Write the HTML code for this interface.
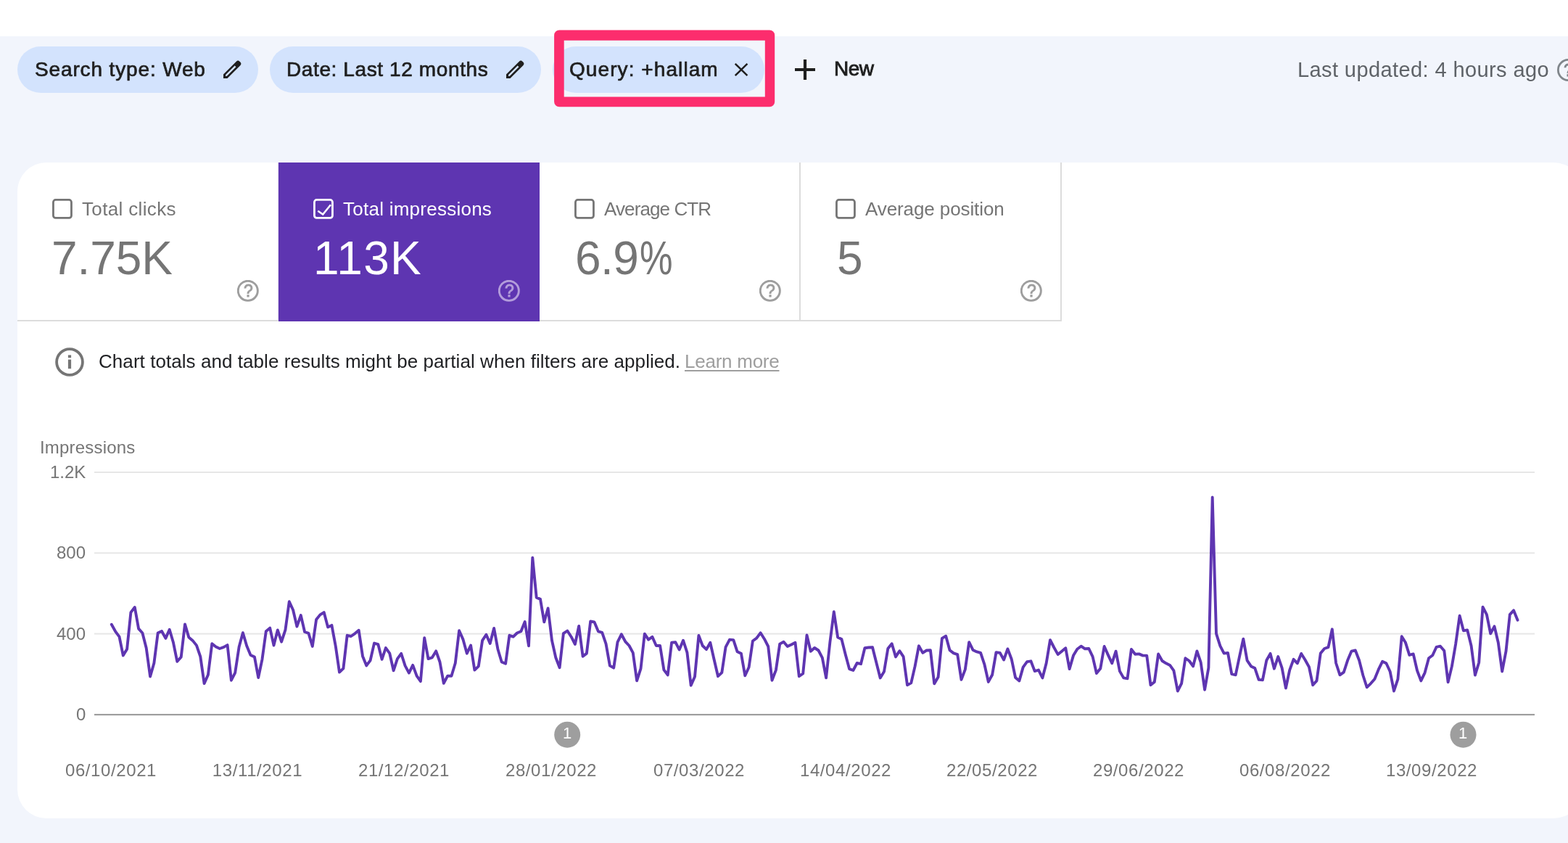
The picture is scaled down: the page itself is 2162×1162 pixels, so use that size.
<!DOCTYPE html>
<html lang="en"><head><meta charset="utf-8"><title>Search Console Performance</title>
<style>
*{box-sizing:border-box;margin:0;padding:0}
html,body{width:2162px;height:1162px;overflow:hidden;background:#fff}
body{position:relative;font-family:"Liberation Sans",sans-serif;color:#1f1f1f}
.abs{position:absolute}
.t{position:absolute;white-space:nowrap;line-height:1;will-change:transform}
#bg{left:0;top:50px;width:2162px;height:1112px;background:#f2f5fc}
.chip{position:absolute;top:64px;height:64px;border-radius:32px;background:#d3e3fd}
.chiptxt{font-size:28px;color:#1f1f1f;-webkit-text-stroke:0.7px #1f1f1f}
#card{left:24px;top:224px;width:2158px;height:904px;background:#fff;border-radius:40px}
.tile{position:absolute;top:224px;width:360px;height:219px;border-bottom:2px solid #dcdcdc}
.lbl{font-size:26px;color:#757575}
.val{font-size:64px;color:#757575}
.ax{font-size:24px;color:#757575}
</style></head>
<body>
<div id="bg" class="abs"></div>
<div class="chip" style="left:24px;width:332px"></div>
<div class="chip" style="left:372px;width:374px"></div>
<div class="chip" style="left:762px;width:292px"></div>
<span id="c1" class="t chiptxt" style="left:47.60px;top:81.70px;font-size:28px;letter-spacing:0.86px;">Search type: Web</span>
<span id="c2" class="t chiptxt" style="left:395.00px;top:81.70px;font-size:28px;letter-spacing:0.61px;">Date: Last 12 months</span>
<span id="c3" class="t chiptxt" style="left:785.20px;top:81.70px;font-size:28px;letter-spacing:1.08px;">Query: +hallam</span>
<svg class="abs" style="left:303.8px;top:77.8px;overflow:visible" width="34" height="34" viewBox="0 0 34 34"><g transform="translate(4 30) rotate(45)"><path fill-rule="evenodd" fill="#1f1f1f" d="M0 0 L-3.85 -3.85 L-3.85 -29.1 Q-3.85 -32.3 -0.65 -32.3 L0.65 -32.3 Q3.85 -32.3 3.85 -29.1 L3.85 -3.85 Z M-1.25 -23.4 L1.25 -23.4 L1.25 -5.7 L0 -4.3 L-1.25 -5.7 Z"/></g></svg>
<svg class="abs" style="left:693.8px;top:77.8px;overflow:visible" width="34" height="34" viewBox="0 0 34 34"><g transform="translate(4 30) rotate(45)"><path fill-rule="evenodd" fill="#1f1f1f" d="M0 0 L-3.85 -3.85 L-3.85 -29.1 Q-3.85 -32.3 -0.65 -32.3 L0.65 -32.3 Q3.85 -32.3 3.85 -29.1 L3.85 -3.85 Z M-1.25 -23.4 L1.25 -23.4 L1.25 -5.7 L0 -4.3 L-1.25 -5.7 Z"/></g></svg>
<svg class="abs" style="left:1011.9px;top:86px" width="20" height="20" viewBox="0 0 20 20"><path d="M1.7 1.8 L18.4 18.2 M18.4 1.8 L1.7 18.2" stroke="#1f1f1f" stroke-width="2.5" fill="none"/></svg>
<svg class="abs" style="left:760px;top:38px" width="312" height="114" viewBox="760 38 312 114"><path fill-rule="evenodd" fill="#fc2d6d" d="M771.1 41.5 H1061.2 A7 7 0 0 1 1068.2 48.5 V140.3 A7 7 0 0 1 1061.2 147.3 H771.1 A7 7 0 0 1 764.1 140.3 V48.5 A7 7 0 0 1 771.1 41.5 Z M777.7 55.7 V133.6 H1054.8 V55.7 Z"/></svg>
<svg class="abs" style="left:1095px;top:81.1px" width="30" height="30" viewBox="0 0 30 30"><path d="M15 1.1 V28.9 M1 15 H29" stroke="#1f1f1f" stroke-width="4.2" fill="none"/></svg>
<span id="new" class="t chiptxt" style="left:1150.00px;top:81.20px;font-size:28px;letter-spacing:-0.55px;-webkit-text-stroke:0.9px #1f1f1f">New</span>
<span id="lu" class="t " style="left:1788.60px;top:82.25px;font-size:29px;letter-spacing:0.4px;color:#5f6368">Last updated: 4 hours ago</span>
<svg class="abs" style="left:2147px;top:81px" width="32" height="32" viewBox="0 0 32 32"><circle cx="15.5" cy="15.5" r="14.1" fill="none" stroke="#80868b" stroke-width="2.8"/></svg>
<span class="t " style="left:2156.00px;top:85.53px;font-size:23px;letter-spacing:0px;color:#80868b;-webkit-text-stroke:0.8px #80868b">?</span>
<div id="card" class="abs"></div>
<div class="tile" style="left:24px;border-top-left-radius:40px;border-right:1px solid #e9e4f3;"></div>
<svg class="abs" style="left:72px;top:274px" width="28" height="28" viewBox="0 0 28 28"><rect x="1.45" y="1.45" width="25" height="25" rx="3.2" fill="none" stroke="#757575" stroke-width="2.8"/></svg>
<span id="l0" class="t lbl" style="left:112.80px;top:275.19px;font-size:26px;letter-spacing:0.35px;color:#757575">Total clicks</span>
<span id="v0" class="t val" style="left:70.60px;top:323.72px;font-size:64px;letter-spacing:-0.05px;color:#757575">7.75K</span>
<svg class="abs" style="left:327.2px;top:386.1px" width="30" height="30" viewBox="0 0 30 30"><circle cx="14.8" cy="14.8" r="13.55" fill="none" stroke="#9e9e9e" stroke-width="2.9"/></svg>
<span id="q0" class="t " style="left:335.60px;top:389.73px;font-size:23px;letter-spacing:0px;color:#9e9e9e;-webkit-text-stroke:0.9px #9e9e9e">?</span>
<div class="tile" style="left:384px;background:#5e35b1;border-bottom-color:#5e35b1;"></div>
<svg class="abs" style="left:432px;top:274px" width="28" height="28" viewBox="0 0 28 28"><rect x="1.45" y="1.45" width="25" height="25" rx="3.2" fill="none" stroke="#fff" stroke-width="2.8"/><path d="M6.3 16.8 L13.2 21.5 L24 8.2" stroke="#fff" stroke-width="2.5" fill="none"/></svg>
<span id="l1" class="t lbl" style="left:472.80px;top:275.19px;font-size:26px;letter-spacing:0.25px;color:#fff">Total impressions</span>
<span id="v1" class="t val" style="left:432.00px;top:323.72px;font-size:64px;letter-spacing:1.35px;color:#fff">113K</span>
<svg class="abs" style="left:687.2px;top:386.1px" width="30" height="30" viewBox="0 0 30 30"><circle cx="14.8" cy="14.8" r="13.55" fill="none" stroke="#b39ddb" stroke-width="2.9"/></svg>
<span id="q1" class="t " style="left:695.60px;top:389.73px;font-size:23px;letter-spacing:0px;color:#b39ddb;-webkit-text-stroke:0.9px #b39ddb">?</span>
<div class="tile" style="left:744px;border-right:2px solid #dcdcdc;"></div>
<svg class="abs" style="left:792px;top:274px" width="28" height="28" viewBox="0 0 28 28"><rect x="1.45" y="1.45" width="25" height="25" rx="3.2" fill="none" stroke="#757575" stroke-width="2.8"/></svg>
<span id="l2" class="t lbl" style="left:832.80px;top:275.19px;font-size:26px;letter-spacing:-0.9px;color:#757575">Average CTR</span>
<span id="v2" class="t val" style="left:792.60px;top:323.72px;font-size:64px;letter-spacing:-0.6px;color:#757575">6.9<span style="display:inline-block;letter-spacing:0;transform:scaleX(0.8);transform-origin:0 50%;margin-left:1.5px">%</span></span>
<svg class="abs" style="left:1047.2px;top:386.1px" width="30" height="30" viewBox="0 0 30 30"><circle cx="14.8" cy="14.8" r="13.55" fill="none" stroke="#9e9e9e" stroke-width="2.9"/></svg>
<span id="q2" class="t " style="left:1055.60px;top:389.73px;font-size:23px;letter-spacing:0px;color:#9e9e9e;-webkit-text-stroke:0.9px #9e9e9e">?</span>
<div class="tile" style="left:1104px;border-right:2px solid #dcdcdc;"></div>
<svg class="abs" style="left:1152px;top:274px" width="28" height="28" viewBox="0 0 28 28"><rect x="1.45" y="1.45" width="25" height="25" rx="3.2" fill="none" stroke="#757575" stroke-width="2.8"/></svg>
<span id="l3" class="t lbl" style="left:1192.80px;top:275.19px;font-size:26px;letter-spacing:-0.1px;color:#757575">Average position</span>
<span id="v3" class="t val" style="left:1154.40px;top:323.72px;font-size:64px;letter-spacing:0px;color:#757575">5</span>
<svg class="abs" style="left:1407.2px;top:386.1px" width="30" height="30" viewBox="0 0 30 30"><circle cx="14.8" cy="14.8" r="13.55" fill="none" stroke="#9e9e9e" stroke-width="2.9"/></svg>
<span id="q3" class="t " style="left:1415.60px;top:389.73px;font-size:23px;letter-spacing:0px;color:#9e9e9e;-webkit-text-stroke:0.9px #9e9e9e">?</span>
<svg class="abs" style="left:76px;top:479px" width="40" height="40" viewBox="0 0 40 40"><circle cx="20" cy="20" r="17.9" fill="none" stroke="#757575" stroke-width="3.8"/><rect x="17.9" y="10.4" width="4.2" height="3.8" fill="#757575"/><rect x="17.9" y="16.6" width="4.2" height="12.6" fill="#757575"/></svg>
<span id="info" class="t " style="left:135.90px;top:485.39px;font-size:26px;letter-spacing:0.06px;color:#202124">Chart totals and table results might be partial when filters are applied.</span>
<span id="lm" class="t " style="left:944.00px;top:485.39px;font-size:26px;letter-spacing:-0.25px;color:#9e9e9e;text-decoration:underline;text-decoration-thickness:1.6px;text-underline-offset:2.5px">Learn more</span>
<span id="imp" class="t ax" style="left:55.30px;top:604.68px;font-size:24px;letter-spacing:0.2px;">Impressions</span>
<svg class="abs" style="left:0;top:0" width="2162" height="1162" viewBox="0 0 2162 1162"><rect x="130" y="650.0" width="1986" height="2" fill="#e7e7e7"/><rect x="130" y="761.3" width="1986" height="2" fill="#e7e7e7"/><rect x="130" y="872.6" width="1986" height="2" fill="#e7e7e7"/><rect x="130" y="984.0" width="1986" height="2.2" fill="#9e9e9e"/><path d="M153.8 860.7 L159.1 870.3 L164.5 877.7 L169.8 903.6 L175.1 894.7 L180.4 844.1 L185.8 837.0 L191.1 866.6 L196.4 872.5 L201.7 893.3 L207.1 932.5 L212.4 914.0 L217.7 872.5 L223.0 870.0 L228.4 879.9 L233.7 867.8 L239.0 885.8 L244.3 911.8 L249.7 905.8 L255.0 860.4 L260.3 878.4 L265.6 882.9 L271.0 889.6 L276.3 905.1 L281.6 942.1 L286.9 930.3 L292.3 887.3 L297.6 891.5 L302.9 894.0 L308.3 892.1 L313.6 889.1 L318.9 937.7 L324.2 927.3 L329.6 891.8 L334.9 872.2 L340.2 890.3 L345.5 902.9 L350.9 905.4 L356.2 934.0 L361.5 908.8 L366.8 870.3 L372.2 865.6 L377.5 889.6 L382.8 868.4 L388.1 884.7 L393.5 868.1 L398.8 829.3 L404.1 840.7 L409.4 863.6 L414.8 848.1 L420.1 871.0 L425.4 872.8 L430.8 891.0 L436.1 854.0 L441.4 847.4 L446.7 844.1 L452.1 864.4 L457.4 861.9 L462.7 890.3 L468.0 926.6 L473.4 921.4 L478.7 875.8 L484.0 877.0 L489.3 873.3 L494.7 868.8 L500.0 904.4 L505.3 917.4 L510.6 910.3 L516.0 886.6 L521.3 888.1 L526.6 908.8 L531.9 893.0 L537.3 900.7 L542.6 924.3 L547.9 908.1 L553.2 900.9 L558.6 917.7 L563.9 927.6 L569.2 916.9 L574.6 931.7 L579.9 939.1 L585.2 879.2 L590.5 908.1 L595.9 906.3 L601.2 897.4 L606.5 912.5 L611.8 941.8 L617.2 931.7 L622.5 931.7 L627.8 914.0 L633.1 869.3 L638.5 881.4 L643.8 900.7 L649.1 889.6 L654.4 923.6 L659.8 918.4 L665.1 882.9 L670.4 874.7 L675.7 887.0 L681.1 865.9 L686.4 894.7 L691.7 912.5 L697.1 914.7 L702.4 875.8 L707.7 877.7 L713.0 872.5 L718.4 870.3 L723.7 857 L729.0 890.3 L734.3 768.6 L739.7 823.6 L745.0 825.9 L750.3 857.4 L755.6 838.4 L761.0 882.9 L766.3 906.5 L771.6 920.2 L776.9 873.2 L782.3 869.5 L787.6 877.7 L792.9 888 L798.2 862.9 L803.6 904.8 L808.9 900.6 L814.2 856.5 L819.5 857.4 L824.9 870.3 L830.2 871.8 L835.5 887.3 L840.9 917.6 L846.2 920.6 L851.5 885.1 L856.8 874.3 L862.2 884.3 L867.5 890 L872.8 899.9 L878.1 938.3 L883.5 921.6 L888.8 873.7 L894.1 881.6 L899.4 877.9 L904.8 890 L910.1 890 L915.4 923.4 L920.7 930.4 L926.1 885.8 L931.4 885.3 L936.7 895.5 L942.0 882.7 L947.4 899.3 L952.7 944.8 L958.0 932.7 L963.4 876 L968.7 890 L974.0 895.1 L979.3 885.8 L984.7 909.5 L990.0 932.2 L995.3 927.1 L1000.6 891.8 L1006.0 881.6 L1011.3 882.1 L1016.6 898.3 L1021.9 900.7 L1027.3 931.3 L1032.6 919.7 L1037.9 883.5 L1043.2 879.7 L1048.6 872.3 L1053.9 880.7 L1059.2 891.0 L1064.5 937.7 L1069.9 923.6 L1075.2 887.6 L1080.5 884.7 L1085.8 891 L1091.2 888.5 L1096.5 885.8 L1101.8 932.2 L1107.2 928.5 L1112.5 875.5 L1117.8 897.7 L1123.1 893 L1128.5 896.5 L1133.8 906.6 L1139.1 934.4 L1144.4 885.1 L1149.8 843.2 L1155.1 878.4 L1160.4 881.1 L1165.7 902.1 L1171.1 922.1 L1176.4 924 L1181.7 914 L1187.0 915.2 L1192.4 893.3 L1197.7 892.5 L1203.0 892.2 L1208.3 913.2 L1213.7 934.4 L1219.0 925.8 L1224.3 894 L1229.7 887.3 L1235.0 905.4 L1240.3 897.2 L1245.6 905.1 L1251.0 944.3 L1256.3 941.4 L1261.6 918.4 L1266.9 890.3 L1272.3 899.9 L1277.6 896.5 L1282.9 896.2 L1288.2 942.4 L1293.6 933.2 L1298.9 879.9 L1304.2 876.7 L1309.5 896.2 L1314.9 900.4 L1320.2 902.1 L1325.5 936.9 L1330.8 922.9 L1336.2 885.1 L1341.5 895.9 L1346.8 898.4 L1352.1 899.9 L1357.5 916.2 L1362.8 939.9 L1368.1 930.3 L1373.5 899.2 L1378.8 899.9 L1384.1 909.5 L1389.4 894.4 L1394.8 908.8 L1400.1 934 L1405.4 938.4 L1410.7 919.6 L1416.1 912.2 L1421.4 911.3 L1426.7 925.1 L1432.0 923.6 L1437.4 934.4 L1442.7 914 L1448.0 882.1 L1453.3 892.5 L1458.7 902.1 L1464.0 897.7 L1469.3 893.3 L1474.6 922.1 L1480.0 903.6 L1485.3 894.7 L1490.6 890.7 L1496.0 894.3 L1501.3 894 L1506.6 905.1 L1511.9 928 L1517.3 921.4 L1522.6 891 L1527.9 902.9 L1533.2 914.3 L1538.6 897.7 L1543.9 925.1 L1549.2 934.4 L1554.5 935.4 L1559.9 895 L1565.2 901.8 L1570.5 901.4 L1575.8 903.6 L1581.2 903.6 L1586.5 944.3 L1591.8 939.9 L1597.1 901.4 L1602.5 911 L1607.8 914.3 L1613.1 916.9 L1618.4 924.3 L1623.8 952.5 L1629.1 942.1 L1634.4 907.3 L1639.8 911 L1645.1 918.4 L1650.4 897.4 L1655.7 913.2 L1661.1 950.7 L1666.4 920.5 L1671.7 685.5 L1677.0 873.3 L1682.4 890.3 L1687.7 900.6 L1693.0 899.9 L1698.3 929.1 L1703.7 930.3 L1709.0 905.1 L1714.3 880.7 L1719.6 910.3 L1725.0 918.4 L1730.3 921.1 L1735.6 936.9 L1740.9 937.4 L1746.3 910.3 L1751.6 900.9 L1756.9 921.7 L1762.3 905.1 L1767.6 920.6 L1772.9 948.5 L1778.2 923.6 L1783.6 908.8 L1788.9 914.3 L1794.2 900.9 L1799.5 909.5 L1804.9 919.2 L1810.2 944.3 L1815.5 938.4 L1820.8 900.6 L1826.2 894 L1831.5 892.1 L1836.8 867.3 L1842.1 914 L1847.5 930.3 L1852.8 926.6 L1858.1 910.3 L1863.4 897.7 L1868.8 896.5 L1874.1 910.3 L1879.4 931 L1884.7 947.3 L1890.1 942.1 L1895.4 935.9 L1900.7 922.9 L1906.1 911.8 L1911.4 914.3 L1916.7 925.8 L1922.0 952.5 L1927.4 936.2 L1932.7 877.3 L1938.0 885.8 L1943.3 902.9 L1948.7 901.4 L1954.0 924.3 L1959.3 938.4 L1964.6 927.3 L1970.0 907.3 L1975.3 903.3 L1980.6 891.8 L1985.9 890.7 L1991.3 897 L1996.6 940.3 L2001.9 918.4 L2007.2 887.3 L2012.6 848.8 L2017.9 869.3 L2023.2 868.4 L2028.6 890.3 L2033.9 930.6 L2039.2 913.2 L2044.5 836.7 L2049.9 847.1 L2055.2 873.3 L2060.5 863.4 L2065.8 885.8 L2071.2 925.5 L2076.5 897.7 L2081.8 847.1 L2087.1 841.4 L2092.5 854.8" fill="none" stroke="#5e35b1" stroke-width="3.9" stroke-linejoin="round" stroke-linecap="round"/><circle cx="782.2" cy="1012.7" r="18" fill="#9e9e9e"/><circle cx="2017.5" cy="1012.7" r="18" fill="#9e9e9e"/></svg>
<span class="t ax" id="y0" style="right:2043.5px;top:639.18px">1.2K</span>
<span class="t ax" id="y1" style="right:2043.5px;top:750.48px">800</span>
<span class="t ax" id="y2" style="right:2043.5px;top:861.78px">400</span>
<span class="t ax" id="y3" style="right:2043.5px;top:973.18px">0</span>
<span class="t " style="left:775.90px;top:1000.38px;font-size:22px;letter-spacing:0px;color:#fff">1</span>
<span class="t " style="left:2011.20px;top:1000.38px;font-size:22px;letter-spacing:0px;color:#fff">1</span>
<span class="t ax" id="d0" style="left:53px;width:200px;text-align:center;top:1050.48px;letter-spacing:0.6px">06/10/2021</span>
<span class="t ax" id="d1" style="left:255px;width:200px;text-align:center;top:1050.48px;letter-spacing:0.6px">13/11/2021</span>
<span class="t ax" id="d2" style="left:457px;width:200px;text-align:center;top:1050.48px;letter-spacing:0.6px">21/12/2021</span>
<span class="t ax" id="d3" style="left:660px;width:200px;text-align:center;top:1050.48px;letter-spacing:0.6px">28/01/2022</span>
<span class="t ax" id="d4" style="left:864px;width:200px;text-align:center;top:1050.48px;letter-spacing:0.6px">07/03/2022</span>
<span class="t ax" id="d5" style="left:1066px;width:200px;text-align:center;top:1050.48px;letter-spacing:0.6px">14/04/2022</span>
<span class="t ax" id="d6" style="left:1268px;width:200px;text-align:center;top:1050.48px;letter-spacing:0.6px">22/05/2022</span>
<span class="t ax" id="d7" style="left:1470px;width:200px;text-align:center;top:1050.48px;letter-spacing:0.6px">29/06/2022</span>
<span class="t ax" id="d8" style="left:1672px;width:200px;text-align:center;top:1050.48px;letter-spacing:0.6px">06/08/2022</span>
<span class="t ax" id="d9" style="left:1874px;width:200px;text-align:center;top:1050.48px;letter-spacing:0.6px">13/09/2022</span>
</body></html>
